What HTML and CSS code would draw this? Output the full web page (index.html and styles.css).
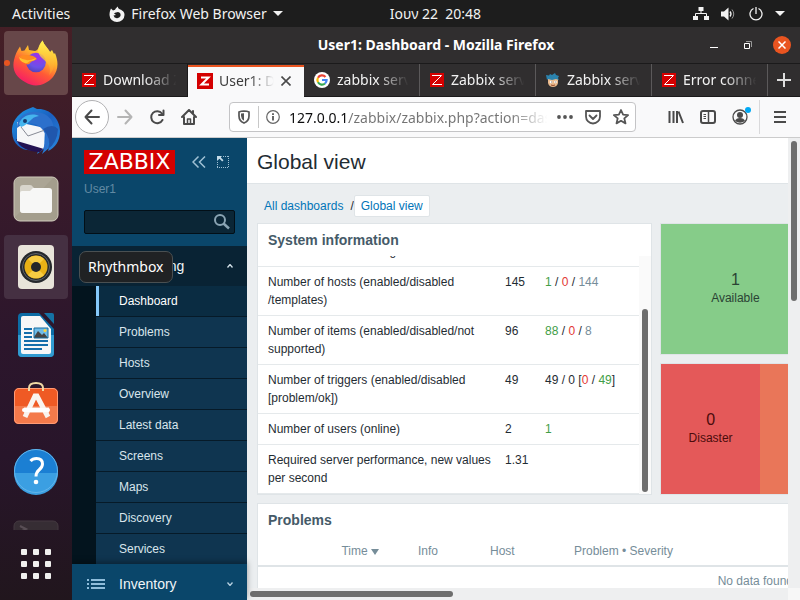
FILE: index.html
```html
<!DOCTYPE html>
<html lang="en">
<head>
<meta charset="utf-8">
<title>User1: Dashboard</title>
<link rel="stylesheet" href="styles.css">
</head>
<body>
<header class="topbar">
  <div class="topbar-left">
    <button class="top-btn">Activities</button>
    <button class="top-btn app-menu">
      <svg width="16" height="16" viewBox="0 0 16 16"><path d="M2 2.500 4 4.500 6 3.800C7 2 8 1 9 .5c-.2 1.200.3 2 1.300 2.500C12.500 4 15.800 5.500 15.500 9a7.500 7 0 0 1-15 0C.5 6 1 4.500 2 2.500z" fill="#f2f2f2"/><path d="M5 7.500C6.500 6 7.500 6.500 9 6c2 .3 3 2 2.500 4A3.700 3.500 0 0 1 4.500 9.500L7 9z" fill="#1d1d1d"/></svg>
      <span>Firefox Web Browser</span><i class="caret"></i>
    </button>
  </div>
  <time class="clock">Ιουν 22&nbsp; 20:48</time>
  <button class="top-btn tray" aria-label="System menu">
    <svg width="16" height="14" viewBox="0 0 16 14" fill="#f2f2f2"><path d="M5.500 0h5v4h-5zM0 9h5v4H0zM5.500 9h5v4h-5zM11 9h5v4h-5z" fill="none"/><path d="M5.500 0h5v4h-5zM0 9h5v4H0zM11 9h5v4h-5z"/><path d="M8 4v2.500M2.500 9V6.500h11V9" fill="none" stroke="#f2f2f2"/></svg>
    <svg width="16" height="14" viewBox="0 0 16 14"><path d="M0 4.500h3L7.500.5v13L3 9.500H0z" fill="#f2f2f2"/><path d="M9 4.500q2 2.500 0 5" fill="none" stroke="#f2f2f2" stroke-width="1.300"/><path d="M11 2.500q3.500 4.500 0 9" fill="none" stroke="#999"/></svg>
    <svg width="14" height="14" viewBox="0 0 14 14" fill="none" stroke="#f2f2f2" stroke-width="1.300"><path d="M7 0v7M4.500 1.500a6 6 0 1 0 5 0"/></svg>
    <i class="caret"></i>
  </button>
</header>
<div class="desktop">
  <nav class="dock" aria-label="Applications">
    <div class="dock-apps">
      <button class="dock-app focused running" aria-label="Firefox">
        <svg width="48" height="48" viewBox="0 0 48 48">
          <defs>
            <linearGradient id="ff" x1=".8" y1="0" x2=".25" y2="1"><stop offset="0" stop-color="#fff44f"/><stop offset=".35" stop-color="#ffb52c"/><stop offset=".62" stop-color="#ff5a36"/><stop offset="1" stop-color="#f5156c"/></linearGradient>
            <radialGradient id="ffg" cx=".6" cy=".2" r=".9"><stop offset="0" stop-color="#a02ee8"/><stop offset=".6" stop-color="#6b51e8"/><stop offset="1" stop-color="#4d3fae"/></radialGradient>
            <linearGradient id="fft" x1="0" y1="0" x2="0" y2="1"><stop offset="0" stop-color="#fff44f"/><stop offset="1" stop-color="#ff9a2a" stop-opacity=".6"/></linearGradient>
          </defs>
          <path d="M8 7.500 9.500 12l3-.5L16 6l1 5 6 1c4-1 5-7 7.500-10.500C32 6 36 9 38 13l2-2 2 4 1-1c4 10 3 17-2 24-8 9-19 11-28 5C3 38 0 30 2 21c1-5 3-9 6-13.500z" fill="url(#ff)"/>
          <circle cx="24" cy="23.500" r="9.800" fill="url(#ffg)"/>
          <path d="M30.500 1.500C32 6 36 9 38 13c6 8 5 18-1 23 2-4 1-9-2-12-3-4-8-6-9-12 0-4 2-8 4.500-10.500z" fill="url(#fft)"/>
          <path d="M8 17c5-1 9-2 15 1l2 2c-2 2-5 1.500-7 4-2 4-8-1-10-7z" fill="#ff8a20"/>
          <path d="M7 18q7 6 17 1-1 3-6 3-5 5-10-1z" fill="#ffc22f"/>
        </svg>
      </button>
      <button class="dock-app" aria-label="Thunderbird">
        <svg width="48" height="48" viewBox="0 0 48 48">
          <defs><linearGradient id="tb" x1="0" y1="0" x2="1" y2="1"><stop offset="0" stop-color="#1f9be8"/><stop offset=".5" stop-color="#1b5fc0"/><stop offset="1" stop-color="#2b8be0"/></linearGradient></defs>
          <path d="M0 25C-1 14 8 5 16 2l5-2 4 2c12-1 23 9 23 22 0 10-5 17-12 20l1-3-7 6 2-5-7 5 2-5C14 46 1 41 0 25z" fill="url(#tb)"/>
          <path d="M4 32c6 2 18 5 28 9l-4 4C16 45 7 40 4 32z" fill="#241252"/>
          <path d="M5 15 33 21l-1 21L5 34z" fill="#f6f6f8"/>
          <path d="M5 20C5 9 15 4 24 5c13 1 19 10 17 18-1 7-6 11-6 19L31 42c4-9 4-14 1-17-4-8-12-9-19-9-3 1-5 3-8 5z" fill="#2c70cc"/>
          <path d="m9 20 7 9 17-6" fill="none" stroke="#888b96"/>
          <path d="M7 17c2-7 11-12 20-8-9 1-10 9-18 11z" fill="#45b5ee"/>
          <path d="M31 22q10-6 15 0-1 14-10 20 4-10-5-20z" fill="#2057ad"/>
          <circle cx="13" cy="14" r="2" fill="#173b70"/>
        </svg>
      </button>
      <button class="dock-app" aria-label="Files">
        <svg width="48" height="48" viewBox="0 0 48 48"><rect x="2" y="2" width="44" height="44" rx="6" fill="#a49e8d" stroke="#d2cdbe"/><path d="M3 42V8q0-5 5-5h33z" fill="#fff" opacity=".08"/><path d="M8 15V13q0-3 3-3h7q2 0 3 2l2 2h14q3 0 3 3v18q0 3-3 3H11q-3 0-3-3z" fill="#d8d5cc"/><path d="M8 18q0-2 2-2h8l3-3h16q3 0 3 3v19q0 3-3 3H11q-3 0-3-3z" fill="#f7f7f6"/></svg>
      </button>
      <button class="dock-app hovered" aria-label="Rhythmbox" aria-describedby="dock-tip">
        <svg width="48" height="48" viewBox="0 0 48 48"><rect x="6" y="2" width="36" height="44" rx="4" fill="#e8e4da"/><circle cx="24" cy="24" r="16" fill="#25282c"/><circle cx="24" cy="24" r="13.500" fill="none" stroke="#60656a"/><circle cx="24" cy="24" r="11.500" fill="#e9b116"/><path d="M16 16a11.500 11.500 0 0 1 16 0l-8 8zM16 32a11.500 11.500 0 0 0 16 0l-8-8z" fill="#f7cc42"/><circle cx="24" cy="24" r="5" fill="#25272a"/></svg>
      </button>
      <button class="dock-app" aria-label="LibreOffice Writer">
        <svg width="48" height="48" viewBox="0 0 48 48"><path d="M10 2h17l15 16v24q0 4-4 4H10q-4 0-4-4V6q0-4 4-4z" fill="#0c6ca5"/><path d="M6 24h36v18q0 4-4 4H10q-4 0-4-4z" fill="#319bd0"/><path d="M11 5h17l11 13v23q0 2-2 2H11q-2 0-2-2V7q0-2 2-2z" fill="#f7f7f7"/><path d="M32 2h8q2 0 2 2v9z" fill="#1572a5"/><path d="M12 18h8M12 22h8M12 26h8M12 30h24M12 34h24M12 38h18" stroke="#146eab" stroke-width="2"/><path d="M22 17h14v10H22z" fill="#6fbce8"/><path d="m22 26 4-6 4 4 2-2 4 5H22z" fill="#444"/><circle cx="33" cy="19.500" r="1.500" fill="#ffd33d"/><path d="M22 17h14v10H22z" fill="none" stroke="#176c9f"/></svg>
      </button>
      <button class="dock-app" aria-label="Ubuntu Software">
        <svg width="48" height="48" viewBox="0 0 48 48"><rect x="2" y="9" width="44" height="36" rx="5" fill="#ef5a24"/><path d="M2 27h44v13q0 5-5 5H7q-5 0-5-5z" fill="#f47a4b"/><rect x="2.500" y="9.500" width="43" height="35" rx="4.500" fill="none" stroke="#ff9b76"/><path d="M17 12V9q0-5 7-5t7 5v3" fill="none" stroke="#f1d9a5" stroke-width="2"/><path d="M13 38 23 17h2l11 21M12 31h25" fill="none" stroke="#f9f4ef" stroke-width="5"/><rect x="10" y="29" width="28" height="4" rx="2" fill="#fff"/></svg>
      </button>
      <button class="dock-app" aria-label="Help">
        <svg width="48" height="48" viewBox="0 0 48 48"><circle cx="24" cy="24" r="22" fill="#1b7fd3"/><path d="M2 26h44a22 22 0 0 1-44 0z" fill="#3b9fe2"/><circle cx="24" cy="24" r="21.500" fill="none" stroke="#63b5ea"/><path d="M18.500 14q2-2.500 6-2.500 6 0 6 5.500 0 3-3.500 6-3 2.500-3 6.500" fill="none" stroke="#fff" stroke-width="3"/><circle cx="24" cy="35" r="2.300" fill="#fff"/></svg>
      </button>
      <button class="dock-app faded" aria-label="Terminal">
        <svg width="48" height="48" viewBox="0 0 48 48"><rect x="2" y="6" width="44" height="40" rx="5" fill="#3b3338" stroke="#4c4348"/><path d="m8 11 6 3-6 3" fill="none" stroke="#665d62" stroke-width="2"/></svg>
      </button>
    </div>
    <button class="show-apps" aria-label="Show Applications">
      <svg width="30" height="30" viewBox="0 0 30 30" fill="#f0f0ee"><g id="dots"><rect width="6" height="6" rx="1"/><rect x="12" width="6" height="6" rx="1"/><rect x="24" width="6" height="6" rx="1"/></g><use href="#dots" y="12"/><use href="#dots" y="24"/></svg>
    </button>
    <div class="tooltip" id="dock-tip" role="tooltip">Rhythmbox</div>
  </nav>

  <section class="window">
    <div class="titlebar">
      <h1>User1: Dashboard - Mozilla Firefox</h1>
      <div class="window-buttons">
        <button aria-label="Minimize"><svg width="8" height="8" viewBox="0 0 8 8"><path d="M0 6.500h8" stroke="#fff"/></svg></button>
        <button aria-label="Restore"><svg width="8" height="8" viewBox="0 0 8 8" fill="none"><path d="M2 .5h5.500V6" stroke="#999"/><path d="M.5 2.500h5v5h-5z" stroke="#fff"/></svg></button>
        <button class="close" aria-label="Close"><svg width="8" height="8" viewBox="0 0 8 8"><path d="m.5.5 7 7m0-7-7 7" stroke="#fff" stroke-width="1.500"/></svg></button>
      </div>
    </div>
    <div class="tabs">
      <button class="tab"><svg width="14" height="14" viewBox="0 0 14 14"><path d="M0 0h14v14H0z" fill="#d40000"/><path d="M2 2.500h9.500L2.500 11.500H12" fill="none" stroke="#fff"/></svg><span>Download Z</span></button>
      <div class="tab active"><svg width="16" height="16" viewBox="0 0 16 16"><path d="M0 0h16v16H0z" fill="#d40000"/><path d="M4 4.500h7.500L4.500 11.500H12" fill="none" stroke="#fff" stroke-width="2"/></svg><span>User1: Da</span><button aria-label="Close tab"><svg width="10" height="10" viewBox="0 0 10 10"><path d="m.5.5 9 9m0-9-9 9" stroke="#4a4a4a" stroke-width="1.600"/></svg></button></div>
      <button class="tab"><svg width="16" height="16" viewBox="0 0 16 16"><circle cx="8" cy="8" r="8" fill="#fff"/><g fill="none" stroke-width="2.200"><path d="M11.500 5A4.600 4.600 0 0 0 4 5.700" stroke="#ea4335"/><path d="M4 5.700a4.600 4.600 0 0 0 0 4.600" stroke="#fbbc05"/><path d="M4 10.300a4.600 4.600 0 0 0 7 1.200" stroke="#34a853"/><path d="M11 11.500A4.600 4.600 0 0 0 12.600 8H8" stroke="#4285f4"/></g></svg><span>zabbix serve</span></button>
      <button class="tab"><svg width="14" height="14" viewBox="0 0 14 14"><path d="M0 0h14v14H0z" fill="#d40000"/><path d="M2 2.500h9.500L2.500 11.500H12" fill="none" stroke="#fff"/></svg><span>Zabbix serve</span></button>
      <button class="tab"><svg width="14" height="14" viewBox="0 0 14 14"><path d="M2 6h10v4q-1 4-5 4t-5-4z" fill="#e9b98c"/><path d="M0 2l3 .5L4 1l2 1 3-2 1 2 3 1-1 2 1 2-3-1-4 1-4-1-1 1z" fill="#2b83ae"/><circle cx="5" cy="9" r="1.300" fill="#fff"/><circle cx="9.500" cy="9" r="1.300" fill="#fff"/><path d="M5 9h.6M9.500 9h.6" stroke="#222"/><path d="M5 12q2 1 4 0" fill="none" stroke="#954a2d"/></svg><span>Zabbix serve</span></button>
      <button class="tab"><svg width="14" height="14" viewBox="0 0 14 14"><path d="M0 0h14v14H0z" fill="#d40000"/><path d="M2 2.500h9.500L2.500 11.500H12" fill="none" stroke="#fff"/></svg><span>Error connec</span></button>
      <button class="new-tab" aria-label="New tab"><svg width="14" height="14" viewBox="0 0 14 14"><path d="M7 0v14M0 7h14" stroke="#dedede" stroke-width="2"/></svg></button>
    </div>
    <div class="toolbar">
      <button class="back" aria-label="Back"><svg width="16" height="16" viewBox="0 0 16 16" fill="none" stroke="#4a4a4a" stroke-width="2" stroke-linecap="round" stroke-linejoin="round"><path d="M7.500 1.500 1.500 8l6 6.500M1.500 8H15"/></svg></button>
      <button class="tool" aria-label="Forward"><svg width="16" height="16" viewBox="0 0 16 16" fill="none" stroke="#b4b4b4" stroke-width="2" stroke-linecap="round" stroke-linejoin="round"><path d="m8.500 1.500 6 6.500-6 6.500M14.500 8H1"/></svg></button>
      <button class="tool" aria-label="Reload"><svg width="16" height="16" viewBox="0 0 16 16" fill="none" stroke="#4a4a4a" stroke-width="2" stroke-linecap="round"><path d="M13.500 11A6 6 0 1 1 13 4.500"/><path d="M14.500 1.500V6H10" stroke-linejoin="round"/></svg></button>
      <button class="tool" aria-label="Home"><svg width="16" height="16" viewBox="0 0 16 16" fill="none" stroke="#4a4a4a" stroke-width="2" stroke-linecap="round" stroke-linejoin="round"><path d="m1 8 7-7 7 7M3 8v7h10V8"/><path d="M6.500 15v-5h3v5" stroke-width="1.500"/><path d="M12 2v2"/></svg></button>
      <div class="urlbar">
        <svg width="14" height="14" viewBox="0 0 14 14"><path d="M7 1q3 .2 5 1v4q0 5-5 7-5-2-5-7V2q2-.8 5-1z" fill="none" stroke="#555" stroke-width="1.700"/><path d="M7 3.200v7.600q-3-2-3-5V3.500z" fill="#555"/></svg>
        <span class="url-divider"></span>
        <svg width="14" height="14" viewBox="0 0 14 14"><circle cx="7" cy="7" r="6.300" fill="none" stroke="#666" stroke-width="1.200"/><path d="M7 6v4.500M7 3.300V5" stroke="#555" stroke-width="1.800"/></svg>
        <input class="url" type="text" aria-label="Address" value="127.0.0.1/zabbix/zabbix.php?action=dashboard.view">
        <button aria-label="Page actions"><svg width="16" height="16" viewBox="0 0 16 16" fill="#555"><circle cx="2" cy="8" r="1.900"/><circle cx="8" cy="8" r="1.900"/><circle cx="14" cy="8" r="1.900"/></svg></button>
        <button aria-label="Save to Pocket"><svg width="16" height="16" viewBox="0 0 16 16" fill="none" stroke="#555" stroke-width="1.800" stroke-linecap="round" stroke-linejoin="round"><path d="M1 2h14v5.500a7 7 0 0 1-14 0zM4.500 6.500 8 10l3.500-3.500"/></svg></button>
        <button aria-label="Bookmark"><svg width="16" height="16" viewBox="0 0 16 16" fill="none" stroke="#555" stroke-width="1.800" stroke-linejoin="round"><path d="m8 1 2.100 4.600 5 .5-3.800 3.300 1.200 5L8 11.800l-4.500 2.600 1.200-5L.9 6.100l5-.5z"/></svg></button>
      </div>
      <button class="tool" aria-label="Library"><svg width="16" height="16" viewBox="0 0 16 16" stroke="#4a4a4a" stroke-width="2"><path d="M1.500 2v12M5.500 2v12M9 2v12M10.500 2.500l4.500 11.500"/></svg></button>
      <button class="tool" aria-label="Sidebars"><svg width="16" height="16" viewBox="0 0 16 16" fill="none" stroke="#4a4a4a"><rect x="1" y="2" width="14" height="12" rx="2" stroke-width="2"/><path d="M8.500 2v12" stroke-width="1.500"/><path d="M3.500 5.500H6M3.500 7.500H6M3.500 9.500H6"/></svg></button>
      <button class="tool account" aria-label="Account"><svg width="16" height="16" viewBox="0 0 16 16"><circle cx="8" cy="8" r="7" fill="none" stroke="#4a4a4a" stroke-width="1.300"/><circle cx="8" cy="6" r="3" fill="#4a4a4a"/><path d="M3 12q1-3 5-3t5 3q-5 3.500-10 0z" fill="#4a4a4a"/></svg><i class="dot"></i></button>
      <span class="tool-divider"></span>
      <button class="tool" aria-label="Menu"><svg width="12" height="12" viewBox="0 0 12 12" stroke="#4a4a4a" stroke-width="2"><path d="M0 1h12M0 6h12M0 11h12"/></svg></button>
    </div>

    <div class="page">
      <aside class="sidebar">
        <div class="brand">
          <a class="logo" href="#">ZABBIX</a>
          <button aria-label="Collapse sidebar"><svg width="14" height="12" viewBox="0 0 14 12" fill="none" stroke="#9fc0d4" stroke-width="1.500"><path d="M6.500.5 1 6l5.500 5.500M13 .5 7.500 6l5.500 5.500"/></svg></button>
          <button aria-label="Hide sidebar"><svg width="12" height="12" viewBox="0 0 12 12" fill="none" stroke="#9fc0d4"><path d="M6 .5h6M11.500 0v12M.5 6v6M0 11.500h12" stroke-dasharray="1 1"/><path d="M0 0h5L3.800 1.500l2.700 2.700-1.300 1.300-2.700-2.700L0 5z" fill="#c4dbe8" stroke="none"/></svg></button>
        </div>
        <div class="user">User1</div>
        <form class="search">
          <input type="search" aria-label="Search">
          <button type="button" aria-label="Search"><svg width="16" height="16" viewBox="0 0 16 16" fill="none" stroke="#8aa4b3" stroke-width="2"><circle cx="6" cy="6" r="5"/><path d="m9.500 9.500 5.500 5" stroke-width="2.500"/></svg></button>
        </form>
        <button class="section open">
          <svg width="18" height="12" viewBox="0 0 18 12"><path d="M0 6q9-12 18 0-9 12-18 0z" fill="#7fa3b8"/></svg>
          <span>Monitoring</span>
          <svg width="6" height="4" viewBox="0 0 6 4" fill="none" stroke="#d3e0e8" stroke-width="1.300"><path d="m.5 3.500 2.500-3 2.500 3"/></svg>
        </button>
        <ul class="submenu">
          <li><a class="current" href="#">Dashboard</a></li>
          <li><a href="#">Problems</a></li>
          <li><a href="#">Hosts</a></li>
          <li><a href="#">Overview</a></li>
          <li><a href="#">Latest data</a></li>
          <li><a href="#">Screens</a></li>
          <li><a href="#">Maps</a></li>
          <li><a href="#">Discovery</a></li>
          <li><a href="#">Services</a></li>
        </ul>
        <button class="section inventory">
          <svg width="18" height="10" viewBox="0 0 18 10" stroke="#8fbddb" stroke-width="2"><path d="M0 1h2M0 5h2M0 9h2M4 1h14M4 5h14M4 9h14"/></svg>
          <span>Inventory</span>
          <svg width="6" height="4" viewBox="0 0 6 4" fill="none" stroke="#b5cfdf" stroke-width="1.300"><path d="m.5.5 2.500 3 2.500-3"/></svg>
        </button>
      </aside>

      <div class="viewport">
        <main class="content">
          <header class="page-title"><h2>Global view</h2></header>
          <nav class="crumbs" aria-label="Breadcrumb"><a href="#">All dashboards</a><span>/</span><a class="here" href="#">Global view</a></nav>
          <div class="dashboard">
            <section class="widget sysinfo">
              <h3>System information</h3>
              <div class="scroller">
                <div class="rows">
                  <table>
                    <colgroup><col class="c-name"><col class="c-value"><col></colgroup>
                    <tbody>
                      <tr><td>Zabbix server is running</td><td></td><td></td></tr>
                      <tr><td>Number of hosts (enabled/disabled<br>/templates)</td><td>145</td><td><b class="ok">1</b> / <b class="bad">0</b> / <b class="dim">144</b></td></tr>
                      <tr><td>Number of items (enabled/disabled/not supported)</td><td>96</td><td><b class="ok">88</b> / <b class="bad">0</b> / <b class="dim">8</b></td></tr>
                      <tr><td>Number of triggers (enabled/disabled [problem/ok])</td><td>49</td><td>49 / 0 [<b class="bad">0</b> / <b class="ok">49</b>]</td></tr>
                      <tr><td>Number of users (online)</td><td>2</td><td><b class="ok">1</b></td></tr>
                      <tr><td>Required server performance, new values per second</td><td>1.31</td><td></td></tr>
                    </tbody>
                  </table>
                </div>
                <div class="rail"><i class="thumb"></i></div>
              </div>
            </section>
            <div class="stats">
              <section class="tiles hosts"><div class="tile available"><strong>1</strong><span>Available</span></div></section>
              <section class="tiles severities"><div class="tile disaster"><strong>0</strong><span>Disaster</span></div><div class="tile high"></div></section>
            </div>
            <section class="widget problems">
              <h3>Problems</h3>
              <table>
                <colgroup><col class="p-time"><col class="p-info"><col class="p-host"><col></colgroup>
                <thead><tr><th class="sorted">Time <i class="sort"></i></th><th>Info</th><th>Host</th><th>Problem • Severity</th></tr></thead>
                <tbody><tr><td colspan="4">No data found.</td></tr></tbody>
              </table>
            </section>
          </div>
        </main>
        <div class="vbar"><i class="thumb"></i></div>
        <div class="hbar"><i class="thumb"></i></div>
        <div class="corner"></div>
      </div>
    </div>
  </section>
</div>
</body>
</html>
```
FILE: styles.css
```css
* { box-sizing: border-box; }
html, body { height: 100%; margin: 0; }
body {
  display: flex;
  flex-direction: column;
  overflow: hidden;
  background: #1d1d1d;
  color: #1f2c33;
  font: 12px/18px "Liberation Sans", Arial, sans-serif;
}
button, input { font: inherit; color: inherit; border: 0; padding: 0; margin: 0; background: none; }
svg { display: block; flex: none; }
h1, h2, h3, ul { margin: 0; padding: 0; }
a { color: #0275b8; text-decoration: none; }
table { border-collapse: collapse; table-layout: fixed; width: 100%; }

.topbar, .dock, .titlebar, .tabs, .toolbar { font-family: "Noto Sans", "Open Sans", sans-serif; }

/* Desktop top bar */
.topbar {
  display: grid;
  grid-template-columns: 1fr auto 1fr;
  align-items: center;
  height: 27px;
  flex: none;
  padding: 0 15px 0 12px;
  background: #1d1d1d;
  color: #f2f2f2;
  font-size: 14px;
}
.topbar-left, .top-btn { display: flex; align-items: center; }
.topbar-left { gap: 39px; white-space: nowrap; }
.app-menu { gap: 6px; }
.clock { padding-left: 74px; white-space: nowrap; }
.tray { justify-self: end; gap: 12px; }
.caret { border: 5px solid transparent; border-top-color: #f2f2f2; border-bottom: 0; }

.desktop { display: flex; flex: 1; min-height: 0; }

/* Dock */
.dock {
  position: relative;
  z-index: 2;
  display: flex;
  flex-direction: column;
  flex: none;
  width: 72px;
  background: linear-gradient(#451f26, #371a2b 30%, #2c162c 55%, #28152a 75%, #21161d);
}
.dock-apps {
  display: flex;
  flex-direction: column;
  align-items: center;
  gap: 4px;
  flex: 1;
  min-height: 0;
  padding-top: 4px;
  overflow: hidden;
}
.dock-app {
  position: relative;
  display: grid;
  place-items: center;
  flex: none;
  width: 64px;
  height: 64px;
  border-radius: 4px;
}
.dock-app.focused { background: #674749; }
.dock-app.hovered { background: #453042; }
.dock-app.faded { opacity: .8; }
.running::before {
  content: "";
  position: absolute;
  left: 0;
  top: 29px;
  width: 6px;
  height: 6px;
  border-radius: 3px;
  background: #e95420;
}
.show-apps { display: grid; place-items: center; flex: none; height: 70px; padding-bottom: 2px; }
.tooltip {
  position: absolute;
  left: 79px;
  top: 224px;
  padding: 6px 8px;
  border: 1px solid #4a5052;
  border-radius: 7px;
  background: #202224;
  color: #fff;
  font-size: 14px;
  line-height: 18px;
}

/* Browser window */
.window { display: flex; flex-direction: column; flex: 1; min-width: 0; }
.titlebar {
  position: relative;
  display: grid;
  place-items: center;
  flex: none;
  height: 36px;
  background: #302e2f;
  color: #fff;
}
.titlebar h1 { font-size: 14px; line-height: 20px; }
.window-buttons {
  position: absolute;
  right: 9px;
  top: 9px;
  display: flex;
  gap: 16px;
}
.window-buttons button { display: grid; place-items: center; width: 18px; height: 18px; }
.window-buttons .close { border-radius: 9px; background: #e95420; }

.tabs {
  display: grid;
  grid-template-columns: repeat(6, 1fr) 32px;
  flex: none;
  height: 34px;
  border-top: 1px solid #1b1a1b;
  border-bottom: 1px solid #1b1a1b;
  background: #302e2f;
  color: #f2f2f2;
  font-size: 14px;
}
.tab {
  display: flex;
  align-items: center;
  gap: 7px;
  min-width: 0;
  padding: 0 9px 0 10px;
  border-right: 1px solid #5b595a;
}
.tab span {
  flex: 1;
  min-width: 0;
  overflow: hidden;
  white-space: nowrap;
  text-align: left;
  mask-image: linear-gradient(90deg, #000 55%, transparent 98%);
}
.tab:first-child { border-right-color: #1b1a1b; }
.tab.active {
  gap: 6px;
  margin: 1px 0 -1px;
  padding: 0 13px 3px 9px;
  border: 0;
  border-top: 2px solid #e95420;
  background: #f9f9fa;
  color: #3c3c3c;
}
.new-tab { display: grid; place-items: center; }

.toolbar {
  display: flex;
  align-items: center;
  flex: none;
  height: 41px;
  padding: 0 4px 0 3px;
  border-bottom: 1px solid #ccc;
  background: #f9f9fa;
}
.tool { position: relative; display: grid; place-items: center; flex: none; width: 32px; height: 32px; }
.back {
  display: grid;
  place-items: center;
  flex: none;
  width: 34px;
  height: 34px;
  border: 1px solid #b1b1b3;
  border-radius: 17px;
  background: #fff;
}
.urlbar {
  display: flex;
  align-items: center;
  gap: 7px;
  flex: 1;
  min-width: 0;
  height: 30px;
  margin: 0 24px;
  padding: 0 6px 0 7px;
  border: 1px solid #c4c4c6;
  border-radius: 4px;
  background: #fff;
}
.urlbar button { margin-left: 5px; }
.urlbar button:first-of-type { margin-left: 0; }
.url-divider { width: 1px; height: 22px; background: #c8c8c8; }
.url {
  flex: 1;
  min-width: 0;
  height: 24px;
  padding-left: 2px;
  outline: 0;
  color: transparent;
  font-size: 14px;
  background: linear-gradient(90deg, #0c0c0d 62px, #737373 62px, #737373 85%, transparent 99%);
  background-clip: text;
}
.account .dot {
  position: absolute;
  right: 5px;
  top: 6px;
  width: 6px;
  height: 6px;
  border-radius: 3px;
  background: #00a9f4;
}
.tool-divider { width: 1px; height: 34px; margin: 0 4px 0 3px; background: #d9d9db; }

/* Zabbix sidebar */
.page { display: flex; flex: 1; min-height: 0; }
.sidebar { display: flex; flex-direction: column; flex: none; width: 175px; background: #0a466a; }
.brand { display: flex; align-items: center; flex: none; gap: 11px; padding: 12px 12px 0; }
.logo {
  width: 91px;
  margin-right: 6px;
  background: #d40000;
  color: #fff;
  font: 22px/24px "DejaVu Sans", sans-serif;
  text-align: center;
}
.user { flex: none; padding: 6px 12px 12px; color: #628aa3; }
.search {
  display: flex;
  align-items: center;
  flex: none;
  height: 24px;
  margin: 0 12px 12px;
  padding: 0 4px;
  border: 1px solid #020f17;
  border-radius: 2px;
  background: #0b2636;
}
.search input { flex: 1; min-width: 0; outline: 0; color: #fff; }
.section {
  position: relative;
  display: flex;
  align-items: center;
  flex: none;
  height: 40px;
  gap: 14px;
  padding: 0 14px 0 15px;
  color: #f0f5f8;
  font-size: 14px;
  text-align: left;
}
.section span { flex: 1; }
.section.open { background: #092334; }
.submenu {
  flex: 1;
  min-height: 0;
  overflow: hidden;
  padding-left: 24px;
  background: #03141e;
  list-style: none;
}
.submenu li { border-bottom: 1px solid #061a28; }
.submenu a { display: block; padding: 6px 20px; border-left: 3px solid #0f3550; background: #0f3550; color: #d9e5ec; }
.submenu .current { border-left-color: #85c9fa; background: #0a2c42; color: #fff; }
.section.inventory {
  height: 36px;
  padding-top: 4px;
  background: #0a466a;
  box-shadow: 0 -2px 6px rgba(0, 0, 0, .35);
}

/* Page viewport with scrollbars */
.viewport {
  display: grid;
  grid-template: minmax(0, 1fr) 12px / minmax(0, 1fr) 12px;
  flex: 1;
  min-width: 0;
}
.content { overflow: hidden; background: #ebeef0; }
.vbar, .hbar { padding: 3px; background: #eeeff0; }
.corner { background: #f7f7f7; }
.thumb { display: block; border-radius: 3px; background: #6e6e6e; }
.vbar .thumb { height: 36%; }
.hbar .thumb { width: 38%; height: 6px; }

.page-title { padding: 10px 10px 7px; border-bottom: 1px solid #dfe4e7; background: #fff; }
.page-title h2 { font-size: 21px; font-weight: 400; line-height: 28px; }
.crumbs { display: flex; align-items: center; gap: 7px; padding: 11px 17px 6px; white-space: nowrap; }
.crumbs .here { margin-left: -7px; padding: 0 6px; border: 1px solid #dfe4e7; border-radius: 2px; background: #fff; line-height: 20px; }

.dashboard {
  display: grid;
  grid-template-columns: 395px minmax(0, 1fr);
  gap: 8px;
  min-width: 1020px;
  padding: 0 10px;
}
.widget { border: 1px solid #dfe4e7; background: #fff; }
.widget h3 { padding: 7px 10px; color: #455a68; font-size: 14px; line-height: 18px; }
.sysinfo { display: flex; flex-direction: column; height: 272px; }
.scroller { display: flex; flex: 1; min-height: 0; }
.rows { display: flex; flex-direction: column; justify-content: flex-end; flex: 1; min-width: 0; overflow: hidden; }
.rows td { padding: 6px 5px; border-bottom: 1px solid #e5e9eb; vertical-align: top; }
.rows td:first-child { padding-left: 10px; }
.c-name { width: 242px; }
.c-value { width: 40px; }
.rail { display: flex; flex-direction: column; justify-content: flex-end; width: 12px; padding: 2px 3px; background: #fafafa; }
.rail .thumb { height: 78%; }
b { font-weight: 400; }
.ok { color: #429e47; }
.bad { color: #e33734; }
.dim { color: #768d99; }

.stats { display: grid; grid-template-rows: 1fr 1fr; gap: 8px; }
.tiles { display: grid; border: 1px solid #dfe4e7; }
.hosts { grid-template-columns: repeat(4, 1fr); background: #86cc89; }
.severities { grid-template-columns: repeat(6, 1fr); background: #e97659; }
.tile { display: flex; flex-direction: column; align-items: center; justify-content: center; }
.tile strong { font-size: 16px; font-weight: 400; line-height: 18px; }
.available { color: #2a4334; }
.disaster { background: #e45959; color: #4b0c0c; }

.problems { grid-column: 1 / -1; }
.problems h3 { padding-bottom: 8px; }
.problems th { padding: 5px; border-bottom: 2px solid #dfe4e7; color: #768d99; font-weight: 400; text-align: left; }
.problems .sorted { text-align: right; }
.problems td { padding: 5px; color: #768d99; text-align: center; }
.p-time { width: 126px; }
.p-info { width: 101px; }
.p-host { width: 84px; }
.problems th:nth-child(2) { padding-left: 34px; }
.sort { display: inline-block; border: 4px solid transparent; border-top: 6px solid #768d99; border-bottom: 0; }
```
